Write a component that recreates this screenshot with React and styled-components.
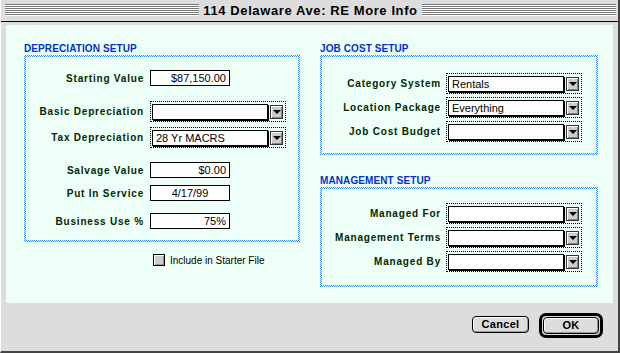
import React from 'react';
import styled, { createGlobalStyle } from 'styled-components';

const colors = {
    chrome: '#dddddd',
    panel: '#eefff7',
    heading: '#0033cc',
    label: '#002800',
    checker: '#2f86f5',
};

const GlobalStyle = createGlobalStyle`
    body {
        margin: 0;
        background: #ffffff;
    }
    * {
        box-sizing: border-box;
    }
`;

const Window = styled.div`
    width: 620px;
    height: 353px;
    background: ${ colors.chrome };
    border-left: 1px solid #ffffff;
    border-right: 2px solid #444444;
    border-bottom: 2px solid #444444;
    display: flex;
    flex-direction: column;
    font-family: "Liberation Sans", Arial, sans-serif;
`;

const TitleBar = styled.div`
    height: 22px;
    flex: none;
    display: flex;
    align-items: center;
    gap: 4px;
    padding: 0 2px 1px 4px;
    border-bottom: 1px solid #000000;
`;

const Stripes = styled.div`
    flex: 1;
    height: 12px;
    background: repeating-linear-gradient(to bottom, #777777 0 1px, #ffffff 1px 2px);
`;

const Title = styled.div`
    font-size: 13px;
    font-weight: bold;
    letter-spacing: 0.6px;
    color: #000000;
    white-space: nowrap;
`;

const Body = styled.div`
    flex: 1;
    display: flex;
    flex-direction: column;
    padding: 3px 5px 0 5px;
`;

const Panel = styled.div`
    height: 278px;
    background: ${ colors.panel };
    display: grid;
    grid-template-columns: 276px 278px;
    column-gap: 20px;
    padding: 18px 0 0 18px;
`;

const Column = styled.div`
    display: flex;
    flex-direction: column;
`;

const Heading = styled.div`
    font-size: 10px;
    font-weight: bold;
    letter-spacing: 0.1px;
    line-height: 12px;
    height: 12px;
    color: ${ colors.heading };
    margin-top: ${ p => p.$mt || 0 }px;
`;

const Box = styled.div`
    border: 2px solid transparent;
    background:
        linear-gradient(${ colors.panel }, ${ colors.panel }) padding-box,
        repeating-conic-gradient(${ colors.checker } 0% 25%, #ffffff 0% 50%) 0 0 / 2px 2px border-box;
    height: ${ p => p.$h }px;
    padding-top: ${ p => p.$pt }px;
    display: grid;
    grid-template-columns: ${ p => p.$labelWidth }px auto;
    column-gap: ${ p => p.$gap }px;
    align-content: start;
`;

const Label = styled.div`
    grid-column: 1;
    text-align: right;
    font-size: 10px;
    font-weight: bold;
    letter-spacing: 0.8px;
    color: ${ colors.label };
    align-self: center;
    margin-top: ${ p => p.$mt || 0 }px;
    white-space: nowrap;
`;

const Field = styled.div`
    grid-column: 2;
    width: 80px;
    height: 16px;
    border: 1px solid #000000;
    background: #ffffff;
    font-size: 11px;
    line-height: 14px;
    padding: 0 3px;
    text-align: ${ p => p.$align || 'right' };
    color: #000000;
    margin-top: ${ p => p.$mt || 0 }px;
`;

const Popup = styled.div`
    grid-column: 2;
    width: 136px;
    height: 21px;
    border: 1px dotted #000000;
    padding: 2px 2px 1px 1px;
    display: flex;
    align-items: flex-start;
    gap: 2px;
    margin-top: ${ p => p.$mt || 0 }px;
`;

const PopupField = styled.div`
    flex: 1;
    height: 16px;
    background: #ffffff;
    border: 1px solid #000000;
    box-shadow: 1px 1px 0 #000000;
    font-size: 11px;
    line-height: 14px;
    padding-left: 3px;
    color: #000000;
`;

const ArrowButton = styled.div`
    width: 13px;
    height: 14px;
    margin-top: 1px;
    border: 1px solid #333333;
    background: #cccccc;
    box-shadow: inset 1px 1px 0 #ffffff, inset -1px -1px 0 #888888;
    display: flex;
    align-items: center;
    justify-content: center;
    &::after {
        content: '';
        border-left: 4px solid transparent;
        border-right: 4px solid transparent;
        border-top: 4px solid #000000;
    }
`;

const CheckRow = styled.div`
    display: flex;
    align-items: center;
    gap: 5px;
    margin: 12px 0 0 129px;
    font-size: 10px;
    color: #000000;
`;

const CheckBox = styled.div`
    width: 12px;
    height: 12px;
    border: 1px solid #000000;
    background: #cccccc;
    box-shadow: inset 1px 1px 0 #ffffff, inset -1px -1px 0 #999999;
`;

const Footer = styled.div`
    flex: 1;
    display: flex;
    justify-content: flex-end;
    align-items: flex-start;
    gap: 10px;
    padding: 10px 10px 0 0;
`;

const Button = styled.div`
    width: ${ p => p.$w }px;
    height: 17px;
    margin-top: ${ p => p.$mt || 0 }px;
    border: 1px solid #000000;
    border-radius: 4px;
    background: ${ colors.chrome };
    box-shadow: inset 1px 1px 0 #ffffff, inset -1px -1px 0 #999999;
    font-size: 11px;
    font-weight: bold;
    letter-spacing: 0.3px;
    line-height: 15px;
    text-align: center;
    color: #000000;
`;

const DefaultRing = styled.div`
    border: 3px solid #000000;
    border-radius: 7px;
    padding: 1px;
    background: ${ colors.chrome };
`;

function Dropdown({ value, mt }) {
    return (
        <Popup $mt={ mt }>
            <PopupField>{ value }</PopupField>
            <ArrowButton />
        </Popup>
    );
}

export default function App() {
    return (
        <>
            <GlobalStyle />
            <Window>
                <TitleBar>
                    <Stripes />
                    <Title>114 Delaware Ave: RE More Info</Title>
                    <Stripes />
                </TitleBar>
                <Body>
                    <Panel>
                        <Column>
                            <Heading>DEPRECIATION SETUP</Heading>
                            <Box $h={ 187 } $pt={ 13 } $labelWidth={ 118 } $gap={ 6 }>
                                <Label>Starting Value</Label>
                                <Field>$87,150.00</Field>
                                <Label $mt={ 15 }>Basic Depreciation</Label>
                                <Dropdown mt={ 15 } />
                                <Label $mt={ 5 }>Tax Depreciation</Label>
                                <Dropdown mt={ 5 } value="28 Yr MACRS" />
                                <Label $mt={ 14 }>Salvage Value</Label>
                                <Field $mt={ 14 }>$0.00</Field>
                                <Label $mt={ 7 }>Put In Service</Label>
                                <Field $mt={ 7 } $align="center">4/17/99</Field>
                                <Label $mt={ 12 }>Business Use %</Label>
                                <Field $mt={ 12 }>75%</Field>
                            </Box>
                            <CheckRow>
                                <CheckBox />
                                Include in Starter File
                            </CheckRow>
                        </Column>
                        <Column>
                            <Heading>JOB COST SETUP</Heading>
                            <Box $h={ 100 } $pt={ 16 } $labelWidth={ 119 } $gap={ 5 }>
                                <Label>Category System</Label>
                                <Dropdown value="Rentals" />
                                <Label $mt={ 3 }>Location Package</Label>
                                <Dropdown mt={ 3 } value="Everything" />
                                <Label $mt={ 3 }>Job Cost Budget</Label>
                                <Dropdown mt={ 3 } />
                            </Box>
                            <Heading $mt={ 20 }>MANAGEMENT SETUP</Heading>
                            <Box $h={ 100 } $pt={ 14 } $labelWidth={ 119 } $gap={ 5 }>
                                <Label>Managed For</Label>
                                <Dropdown />
                                <Label $mt={ 3 }>Management Terms</Label>
                                <Dropdown mt={ 3 } />
                                <Label $mt={ 3 }>Managed By</Label>
                                <Dropdown mt={ 3 } />
                            </Box>
                        </Column>
                    </Panel>
                    <Footer>
                        <Button $w={ 57 } $mt={ 3 }>Cancel</Button>
                        <DefaultRing>
                            <Button $w={ 56 }>OK</Button>
                        </DefaultRing>
                    </Footer>
                </Body>
            </Window>
        </>
    );
}
